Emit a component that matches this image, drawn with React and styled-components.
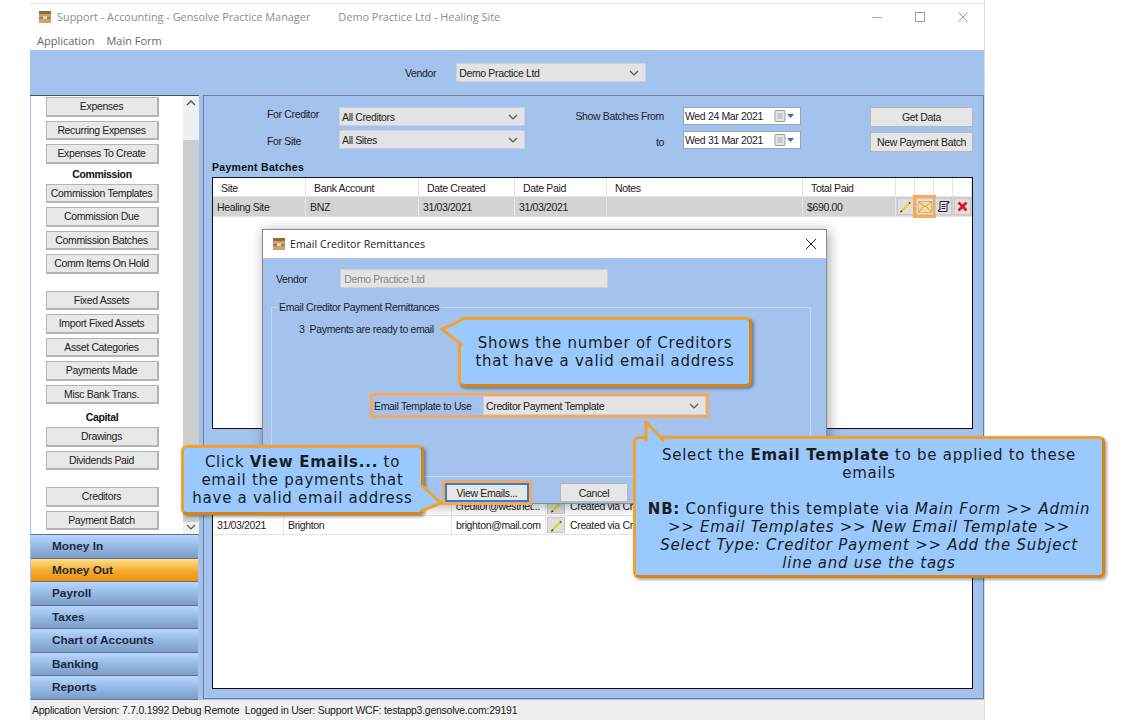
import styled, { createGlobalStyle } from "styled-components"

const SIDE_ITEMS = [
  { label: "Expenses", top: 1 },
  { label: "Recurring Expenses", top: 4 },
  { label: "Expenses To Create", top: 4 },
  { title: "Commission", top: 0.5 },
  { label: "Commission Templates", top: 0 },
  { label: "Commission Due", top: 4 },
  { label: "Commission Batches", top: 4 },
  { label: "Comm Items On Hold", top: 4 },
  { label: "Fixed Assets", top: 17 },
  { label: "Import Fixed Assets", top: 4 },
  { label: "Asset Categories", top: 4 },
  { label: "Payments Made", top: 4 },
  { label: "Misc Bank Trans.", top: 4 },
  { title: "Capital", top: 3.5 },
  { label: "Drawings", top: 0 },
  { label: "Dividends Paid", top: 4 },
  { label: "Creditors", top: 17 },
  { label: "Payment Batch", top: 4 },
]

const NAV_ITEMS = ["Money In", "Money Out", "Payroll", "Taxes", "Chart of Accounts", "Banking", "Reports"]

const BATCH_COLS = "93px 113px 96px 92px 196px 93px 19px 19px 19px 19px"
const EMAIL_COLS = "71px 168px 94px 20px 1fr"

function BoxLogo({ size = 14 }) {
  return (
    <svg width={size} height={size} viewBox="0 0 14 14">
      <rect x="1" y="1" width="12" height="12" fill="#c9a36a" />
      <rect x="1" y="1" width="12" height="3" fill="#8f6a3a" />
      <rect x="1" y="7" width="12" height="2" fill="#a67f4a" />
      <rect x="5" y="6" width="4" height="3" fill="#e7d3a8" />
    </svg>
  )
}

function Chevron() {
  return (
    <svg width="10" height="6" viewBox="0 0 10 6">
      <path d="M1 1l4 4 4-4" fill="none" stroke="#555" strokeWidth="1.2" />
    </svg>
  )
}

function Pencil() {
  return (
    <svg width="13" height="13" viewBox="0 0 13 13">
      <path d="M2.5 11L11 2.5" stroke="#e4d410" strokeWidth="2" />
      <path d="M1 12.5l2.500-1-1.500-1.500z" fill="#222" />
      <path d="M10.200 3.300L11 2.500" stroke="#333" strokeWidth="2" />
    </svg>
  )
}

function Envelope() {
  return (
    <svg width="14" height="12" viewBox="0 0 14 12">
      <rect x=".5" y=".5" width="13" height="11" fill="#f8dd9a" stroke="#d8b66a" />
      <path d="M1 1l6 5 6-5M1 11l4.500-5.500M13 11L8.500 5.500" fill="none" stroke="#c9a050" />
    </svg>
  )
}

function Scroll() {
  return (
    <svg width="13" height="13" viewBox="0 0 13 13">
      <path d="M3 1.500h9v1.500h-2v8.500H1.500V10H3z" fill="#eee" stroke="#222" />
      <path d="M4.500 4.500h4M4.500 6.500h4M4.500 8.500h4" stroke="#222" />
    </svg>
  )
}

function RedCross() {
  return (
    <svg width="11" height="11" viewBox="0 0 11 11">
      <path d="M1.500 1.500l8 8M9.500 1.500l-8 8" stroke="#e8101a" strokeWidth="2.600" />
    </svg>
  )
}

function CalendarDrop() {
  return (
    <DropIcon>
      <svg width="24" height="12" viewBox="0 0 24 12">
        <rect x="1" y=".5" width="10" height="11" rx="1" fill="#e6e6e6" stroke="#9a9a9a" />
        <path d="M3 4h6M3 6h6M3 8h6M5 3v6M7 3v6" stroke="#b4b4b4" strokeWidth=".7" />
        <path d="M13 4h7l-3.500 4z" fill="#44698f" />
      </svg>
    </DropIcon>
  )
}

function Tail({ left, top, width, height, points, line }) {
  return (
    <TailSvg $left={left} $top={top} width={width} height={height} viewBox={`0 0 ${width} ${height}`}>
      <polygon points={points} fill="#99c9ff" />
      <polyline points={line} fill="none" stroke="#f4a02c" strokeWidth="3" />
    </TailSvg>
  )
}

function App() {
  return (
    <Page>
      <GlobalStyle />
      <Window>
        <TitleBar>
          <BoxLogo />
          <AppTitle>Support - Accounting - Gensolve Practice Manager</AppTitle>
          <AppTitle>Demo Practice Ltd - Healing Site</AppTitle>
          <WindowButtons>
            <svg width="12" height="12" viewBox="0 0 12 12"><path d="M1 6.500h10" stroke="#aaa" /></svg>
            <svg width="12" height="12" viewBox="0 0 12 12"><rect x="1.500" y="1.500" width="9" height="9" fill="none" stroke="#999" /></svg>
            <svg width="12" height="12" viewBox="0 0 12 12"><path d="M1.500 1.500l9 9M10.500 1.500l-9 9" stroke="#999" /></svg>
          </WindowButtons>
        </TitleBar>
        <MenuBar>
          <span>Application</span>
          <span>Main Form</span>
        </MenuBar>
        <VendorBar>
          <Label>Vendor</Label>
          <Select $width={190}>Demo Practice Ltd<Chevron /></Select>
        </VendorBar>
        <Body>
          <Sidebar>
            <SideList>
              <SideButtons>
                {SIDE_ITEMS.map((item) => item.title
                  ? <SideTitle key={item.title} $top={item.top}>{item.title}</SideTitle>
                  : <SideButton key={item.label} $top={item.top}>{item.label}</SideButton>)}
              </SideButtons>
              <ScrollBar>
                <svg width="10" height="6" viewBox="0 0 10 6"><path d="M1 5l4-4 4 4" fill="none" stroke="#555" strokeWidth="1.400" /></svg>
                <ScrollThumb />
                <Chevron />
              </ScrollBar>
            </SideList>
            {NAV_ITEMS.map((item) => <NavItem key={item} $active={item === "Money Out"}>{item}</NavItem>)}
          </Sidebar>
          <Main>
            <FilterRow>
              <FilterLabels>
                <Label>For Creditor</Label>
                <Label>For Site</Label>
              </FilterLabels>
              <FilterSelects>
                <Select $width={186}>All Creditors<Chevron /></Select>
                <Select $width={186}>All Sites<Chevron /></Select>
              </FilterSelects>
              <DateLabels>
                <Label>Show Batches From</Label>
                <Label>to</Label>
              </DateLabels>
              <DateBoxes>
                <DateBox>Wed 24 Mar 2021<CalendarDrop /></DateBox>
                <DateBox>Wed 31 Mar 2021<CalendarDrop /></DateBox>
              </DateBoxes>
              <ActionButtons>
                <GreyButton>Get Data</GreyButton>
                <GreyButton>New Payment Batch</GreyButton>
              </ActionButtons>
            </FilterRow>
            <SectionTitle>Payment Batches</SectionTitle>
            <Grid $height={252}>
              <GridRow $height={19} $cols={BATCH_COLS}>
                <HeadCell>Site</HeadCell>
                <HeadCell>Bank Account</HeadCell>
                <HeadCell>Date Created</HeadCell>
                <HeadCell>Date Paid</HeadCell>
                <HeadCell>Notes</HeadCell>
                <HeadCell>Total Paid</HeadCell>
                <HeadCell /><HeadCell /><HeadCell /><HeadCell />
              </GridRow>
              <GridRow $selected $height={20} $cols={BATCH_COLS}>
                <Cell>Healing Site</Cell>
                <Cell>BNZ</Cell>
                <Cell>31/03/2021</Cell>
                <Cell>31/03/2021</Cell>
                <Cell />
                <Cell>$690.00</Cell>
                <IconCell><Pencil /></IconCell>
                <IconCell $marked><Envelope /></IconCell>
                <IconCell><Scroll /></IconCell>
                <IconCell><RedCross /></IconCell>
              </GridRow>
            </Grid>
            <Grid $grow>
              <Spacer />
              <GridRow $height={19} $cols={EMAIL_COLS}>
                <Cell />
                <Cell />
                <Cell>creditor@westnet...</Cell>
                <IconCell><Pencil /></IconCell>
                <Cell>Created via Cr</Cell>
              </GridRow>
              <GridRow $height={19} $cols={EMAIL_COLS}>
                <Cell>31/03/2021</Cell>
                <Cell>Brighton</Cell>
                <Cell>brighton@mail.com</Cell>
                <IconCell><Pencil /></IconCell>
                <Cell>Created via Cr</Cell>
              </GridRow>
            </Grid>
          </Main>
        </Body>
        <StatusBar>Application Version: 7.7.0.1992 Debug Remote&nbsp; Logged in User: Support WCF: testapp3.gensolve.com:29191</StatusBar>
      </Window>

      <Dialog>
        <DialogTitle>
          <BoxLogo />
          <span>Email Creditor Remittances</span>
          <CloseX width="12" height="12" viewBox="0 0 12 12"><path d="M1 1l10 10M11 1L1 11" stroke="#222" /></CloseX>
        </DialogTitle>
        <DialogBody>
          <VendorRow>
            <Label>Vendor</Label>
            <ReadOnlyBox>Demo Practice Ltd</ReadOnlyBox>
          </VendorRow>
          <GroupBox>
            <GroupLegend>Email Creditor Payment Remittances</GroupLegend>
            <ReadyLine>3&nbsp; Payments are ready to email</ReadyLine>
            <TemplateRow>
              <Label>Email Template to Use</Label>
              <Select $width={223}>Creditor Payment Template<Chevron /></Select>
            </TemplateRow>
          </GroupBox>
          <DialogFooter>
            <ViewButton>View Emails...</ViewButton>
            <CancelButton>Cancel</CancelButton>
          </DialogFooter>
        </DialogBody>
      </Dialog>

      <Callout $left={458} $top={317} $width={294} $height={70} $pad={14}>
        <Tail left={-22} top={0} width={27} height={27} points="25,0 2,9 25,25" line="23,0 3,9 23,25" />
        Shows the number of Creditors<br />that have a valid email address
      </Callout>
      <Callout $left={181} $top={445} $width={243} $height={70} $pad={5}>
        <Tail left={234} top={37} width={26} height={27} points="1,0 24,18 1,26" line="3,0 23,18 3,26" />
        Click <b>View Emails...</b> to<br />email the payments that<br />have a valid email address
      </Callout>
      <Callout $left={633} $top={436} $width={472} $height={142} $pad={7}>
        <Tail left={7} top={-18} width={26} height={23} points="3,2 22,21 3,22" line="3,21 3,1 21,20" />
        Select the <b>Email Template</b> to be applied to these<br />emails<br /><br />
        <b>NB:</b> Configure this template via <i>Main Form &gt;&gt; Admin</i><br />
        <i>&gt;&gt; Email Templates &gt;&gt; New Email Template &gt;&gt;</i><br />
        <i>Select Type: Creditor Payment &gt;&gt; Add the Subject</i><br />
        <i>line and use the tags</i>
      </Callout>
    </Page>
  )
}

const GlobalStyle = createGlobalStyle`
  html, body { margin: 0; background: #fff; }
  * { box-sizing: border-box; }
`

const Page = styled.div`
  position: relative;
  width: 1132px;
  height: 720px;
  overflow: hidden;
  font: 10.5px "Liberation Sans", Arial, sans-serif;
  letter-spacing: -.35px;
  color: #222;
`

const Window = styled.div`
  width: 955px;
  height: 720px;
  margin-left: 30px;
  padding-top: 3px;
  display: flex;
  flex-direction: column;
  border-right: 1px solid #dcdcdc;
`

const TitleBar = styled.div`
  height: 30px;
  padding: 0 0 4px 8px;
  border-top: 1px solid #e6e6e6;
  display: flex;
  align-items: center;
  gap: 5px;
`

const AppTitle = styled.span`
  font: 10.9px "Open Sans", sans-serif;
  letter-spacing: 0;
  color: #8c8c8c;
  margin-right: 23px;
`

const WindowButtons = styled.div`
  margin-left: auto;
  padding-right: 15px;
  display: flex;
  gap: 31px;
`

const MenuBar = styled.div`
  height: 17px;
  padding-left: 7px;
  display: flex;
  gap: 12px;
  font: 11px "Open Sans", sans-serif;
  letter-spacing: 0;
  color: #666;
`

const VendorBar = styled.div`
  height: 45px;
  padding-left: 375px;
  background: #a3c2ed;
  display: flex;
  align-items: center;
  gap: 20px;
`

const Label = styled.span`
  color: #222;
  white-space: nowrap;
`

const Select = styled.div`
  width: ${(p) => p.$width}px;
  height: 19px;
  padding: 0 6px 0 2px;
  background: #e3e3e3;
  border: 1px solid #c8d0da;
  display: flex;
  align-items: center;
  justify-content: space-between;
  white-space: nowrap;
`

const Body = styled.div`
  flex: 1;
  display: flex;
  background: #a3c2ed;
  min-height: 0;
`

const Sidebar = styled.div`
  width: 170px;
  margin-right: 4px;
  border-top: 1px solid #44566a;
  display: flex;
  flex-direction: column;
`

const SideList = styled.div`
  height: 439px;
  flex: none;
  background: #fff;
  display: flex;
  border-left: 1px solid #a3c2ed;
  border-bottom: 1px solid #5f7289;
`

const SideButtons = styled.div`
  width: 142px;
  margin-right: 10px;
  display: flex;
  flex-direction: column;
  align-items: center;
`

const SideButton = styled.div`
  width: 113px;
  height: 19.5px;
  margin-top: ${(p) => p.$top}px;
  flex: none;
  background: #e8e8e8;
  border: 1px solid #b4b4b4;
  border-width: 1px 2px 2px 1px;
  display: flex;
  align-items: center;
  justify-content: center;
  white-space: nowrap;
`

const SideTitle = styled.div`
  height: 19.5px;
  margin-top: ${(p) => p.$top}px;
  flex: none;
  display: flex;
  align-items: center;
  font-weight: bold;
  color: #111;
`

const ScrollBar = styled.div`
  width: 16px;
  padding: 4px 0 4px;
  background: #f0f0f0;
  display: flex;
  flex-direction: column;
  align-items: center;
`

const ScrollThumb = styled.div`
  width: 16px;
  flex: 1;
  margin: 34px 0 2px;
  background: #cdcdcd;
`

const NavItem = styled.div`
  height: 23.5px;
  flex: none;
  margin: 0 1px;
  padding-left: 21px;
  display: flex;
  align-items: center;
  font-size: 11.8px;
  font-weight: bold;
  letter-spacing: 0;
  color: #1e2a3c;
  border-bottom: 1px solid #5f7289;
  background: ${(p) => p.$active
    ? "linear-gradient(#fde08c, #f5a623 60%, #ee9414)"
    : "linear-gradient(#b6d7ff, #90b3e0 60%, #7e9cc8)"};
`

const Main = styled.div`
  flex: 1;
  height: 604px;
  padding: 0 10px 9px 8px;
  border: 1px solid #6f8090;
  display: flex;
  flex-direction: column;
`

const FilterRow = styled.div`
  height: 63px;
  padding-top: 11px;
  flex: none;
  display: flex;
`

const FilterLabels = styled.div`
  width: 127px;
  padding: 1px 0 0 55px;
  display: flex;
  flex-direction: column;
  gap: 15px;
`

const FilterSelects = styled.div`
  display: flex;
  flex-direction: column;
  gap: 4px;
`

const DateLabels = styled.div`
  width: 158px;
  padding: 3px 19px 0 0;
  display: flex;
  flex-direction: column;
  align-items: flex-end;
  gap: 14px;
`

const DateBoxes = styled.div`
  display: flex;
  flex-direction: column;
  gap: 6px;
`

const DateBox = styled.div`
  width: 118px;
  height: 18px;
  padding: 0 2px 0 1px;
  background: #fff;
  border: 1px solid #9aa6b4;
  display: flex;
  align-items: center;
  justify-content: space-between;
  white-space: nowrap;
`

const DropIcon = styled.span`
  display: flex;
`

const ActionButtons = styled.div`
  margin-left: auto;
  display: flex;
  flex-direction: column;
  gap: 5px;
`

const GreyButton = styled.div`
  width: 103px;
  height: 20px;
  background: #e6e6e6;
  border: 1px solid #b8b8b8;
  display: flex;
  align-items: center;
  justify-content: center;
  white-space: nowrap;
`

const SectionTitle = styled.div`
  height: 18px;
  flex: none;
  padding-bottom: 2px;
  font-weight: bold;
  letter-spacing: .3px;
  color: #111;
  display: flex;
  align-items: center;
`

const Grid = styled.div`
  height: ${(p) => (p.$grow ? "auto" : `${p.$height}px`)};
  flex: ${(p) => (p.$grow ? 1 : "none")};
  margin-top: ${(p) => (p.$grow ? "18px" : 0)};
  background: #fff;
  border: 1px solid #111;
  display: flex;
  flex-direction: column;
`

const GridRow = styled.div`
  display: grid;
  grid-template-columns: ${(p) => p.$cols};
  height: ${(p) => p.$height}px;
  flex: none;
  align-items: stretch;
  background: ${(p) => (p.$selected ? "#d3d3d3" : "#fff")};
  border-bottom: 1px solid #e2e2e2;
`

const HeadCell = styled.div`
  padding: 1px 0 0 8px;
  display: flex;
  align-items: center;
  border-right: 1px solid #e6e6e6;
`

const Cell = styled.div`
  padding-left: 4px;
  display: flex;
  align-items: center;
  overflow: hidden;
  white-space: nowrap;
  border-right: 1px solid #e6e6e6;
`

const IconCell = styled.div`
  margin: 1px;
  background: #dfdfdf;
  border: 1px solid #c8c8c8;
  display: flex;
  align-items: center;
  justify-content: center;
  outline: ${(p) => (p.$marked ? "3px solid #ffa858" : "none")};
  outline-offset: 0;
`

const Spacer = styled.div`
  height: 49px;
  flex: none;
`

const StatusBar = styled.div`
  height: 20px;
  flex: none;
  padding-left: 2px;
  background: #f0f0f0;
  display: flex;
  align-items: center;
  letter-spacing: -.25px;
`

const Dialog = styled.div`
  position: absolute;
  left: 262px;
  top: 229px;
  width: 565px;
  height: 275px;
  background: #a3c2ed;
  border: 1px solid #8a8a8a;
  box-shadow: 2px 2px 12px rgba(0, 0, 0, .35);
  display: flex;
  flex-direction: column;
`

const DialogTitle = styled.div`
  height: 28px;
  flex: none;
  padding: 0 9px;
  background: #fff;
  display: flex;
  align-items: center;
  gap: 4px;
  font: 10.7px "Open Sans", sans-serif;
  letter-spacing: 0;
  color: #222;
`

const CloseX = styled.svg`
  margin-left: auto;
`

const DialogBody = styled.div`
  flex: 1;
  padding: 11px 16px 0 13px;
  display: flex;
  flex-direction: column;
`

const VendorRow = styled.div`
  display: flex;
  align-items: center;
  gap: 33px;
`

const ReadOnlyBox = styled.div`
  width: 268px;
  height: 19px;
  padding-left: 3px;
  background: #e3e3e3;
  border: 1px solid #c8d0da;
  color: #888;
  display: flex;
  align-items: center;
`

const GroupBox = styled.div`
  position: relative;
  height: 170px;
  margin: 19px -1px 0 -5px;
  padding: 15px 0 0 27px;
  border: 1px solid #c4d6ef;
`

const GroupLegend = styled.div`
  position: absolute;
  left: 5px;
  top: -7px;
  padding: 0 2px;
  background: #a3c2ed;
`

const ReadyLine = styled.div`
  color: #222;
`

const TemplateRow = styled.div`
  position: absolute;
  left: 98px;
  top: 85px;
  width: 339px;
  height: 25px;
  padding-left: 1px;
  border: 3px solid #f4a860;
  display: flex;
  align-items: center;
  justify-content: space-between;
`

const DialogFooter = styled.div`
  margin-top: 6px;
  padding-left: 169px;
  display: flex;
  gap: 31px;
  align-items: center;
`

const ViewButton = styled(GreyButton)`
  width: 84px;
  height: 19px;
  border: 2px solid #2f7fd4;
  outline: 3px solid #f4a860;
`

const CancelButton = styled(GreyButton)`
  width: 68px;
  height: 19px;
`

const Callout = styled.div`
  position: absolute;
  left: ${(p) => p.$left}px;
  top: ${(p) => p.$top}px;
  width: ${(p) => p.$width}px;
  height: ${(p) => p.$height}px;
  padding-top: ${(p) => p.$pad}px;
  background: #99c9ff;
  border: 3px solid #f4a02c;
  border-bottom-color: #d98312;
  border-right-color: #d98312;
  border-radius: 6px;
  box-shadow: 2px 2px 3px rgba(0, 0, 0, .35);
  text-align: center;
  font: 15px/18px "DejaVu Sans", sans-serif;
  letter-spacing: .73px;
  color: #1c1c1c;
  white-space: nowrap;

  b { font-weight: bold; }
`

const TailSvg = styled.svg`
  position: absolute;
  left: ${(p) => p.$left}px;
  top: ${(p) => p.$top}px;
`

export default App
